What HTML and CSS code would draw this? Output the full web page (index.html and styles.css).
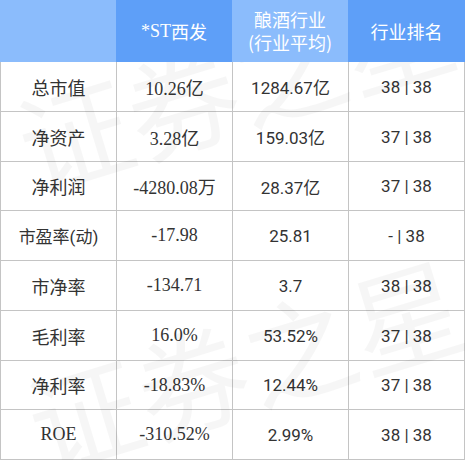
FILE: index.html
```html
<!DOCTYPE html>
<html lang="zh">
<head>
<meta charset="utf-8">
<link rel="stylesheet" href="styles.css">
</head>
<body>
<div class="wrap">
  <div class="head">
    <div class="hc light"></div>
    <div class="hc dark"><span class="serif">*ST</span>西发</div>
    <div class="hc light">酿酒行业<br>(行业平均)</div>
    <div class="hc dark">行业排名</div>
  </div>
  <div class="body">
    <div class="c serif">总市值</div><div class="c serif">10.26亿</div><div class="c">1284.67亿</div><div class="c">38 | 38</div>
    <div class="c serif">净资产</div><div class="c serif">3.28亿</div><div class="c">159.03亿</div><div class="c">37 | 38</div>
    <div class="c serif">净利润</div><div class="c serif">-4280.08万</div><div class="c">28.37亿</div><div class="c">37 | 38</div>
    <div class="c">市盈率(动)</div><div class="c serif">-17.98</div><div class="c">25.81</div><div class="c">- | 38</div>
    <div class="c serif">市净率</div><div class="c serif">-134.71</div><div class="c">3.7</div><div class="c">38 | 38</div>
    <div class="c serif">毛利率</div><div class="c serif">16.0%</div><div class="c">53.52%</div><div class="c">37 | 38</div>
    <div class="c serif">净利率</div><div class="c serif">-18.83%</div><div class="c">12.44%</div><div class="c">37 | 38</div>
    <div class="c serif">ROE</div><div class="c serif">-310.52%</div><div class="c">2.99%</div><div class="c">38 | 38</div>
  </div>
  <div class="wm wm1">证券之星</div>
  <div class="wm wm2">证券之星</div>
</div>
</body>
</html>
```
FILE: styles.css
```css
html, body {
  margin: 0;
  padding: 0;
  background: #fff;
}
.wrap {
  position: relative;
  width: 465px;
  height: 460px;
  overflow: hidden;
  font-family: "Noto Sans CJK SC", sans-serif;
  font-size: 18px;
  color: #333;
}
.serif {
  font-family: "Liberation Serif", "Noto Sans CJK SC", serif;
}
.head {
  position: relative;
  z-index: 2;
  display: grid;
  grid-template-columns: 116px 116px 116px 117px;
  height: 62px;
}
.hc {
  display: flex;
  align-items: center;
  justify-content: center;
  text-align: center;
  color: #fff;
  line-height: 23px;
}
.light { background: #8bbcfc; }
.dark { background: #5e9ff8; }
.body {
  display: grid;
  grid-template-columns: repeat(4, 115px);
  grid-template-rows: 49px 49px 48px 49px 49px 49px 48px 49px;
  gap: 1px;
  padding: 0 1px 1px 1px;
  background: #c4c4c4;
}
.c {
  background: #fff;
  display: flex;
  align-items: center;
  justify-content: center;
  white-space: nowrap;
  font-family: Roboto, "Noto Sans CJK SC", sans-serif;
  font-size: 17px;
}
.c.serif {
  font-family: "Liberation Serif", "Noto Sans CJK SC", serif;
  font-size: 18px;
}
.wm {
  position: absolute;
  z-index: 1;
  font-family: "Noto Sans CJK SC", sans-serif;
  font-size: 112px;
  line-height: 1;
  color: rgba(0, 0, 0, 0.035);
  white-space: nowrap;
  pointer-events: none;
  transform: rotate(-17deg);
  transform-origin: left center;
}
.wm1 { left: 20px; top: 90px; }
.wm2 { left: 30px; top: 370px; }
```
